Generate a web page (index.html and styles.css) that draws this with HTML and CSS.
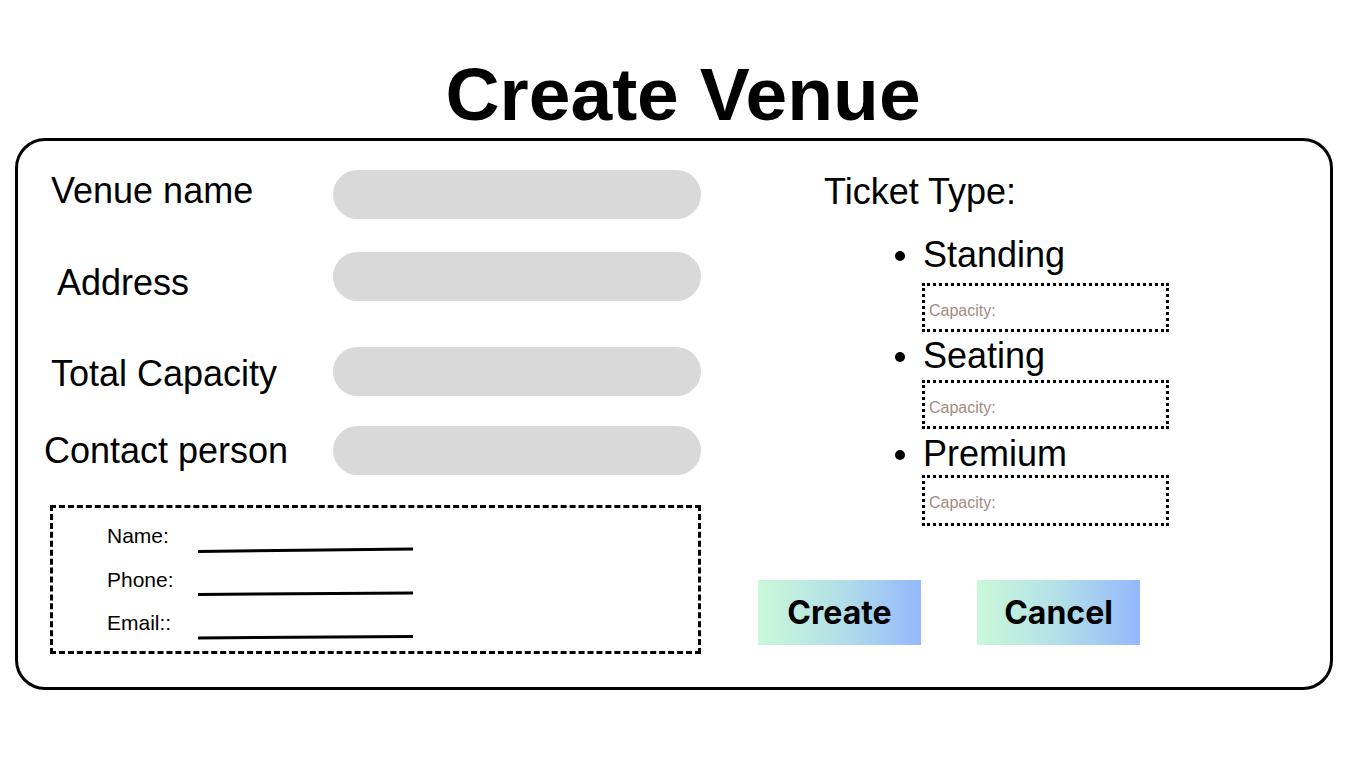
FILE: index.html
```html
<!DOCTYPE html>
<html lang="en">
<head>
<meta charset="utf-8">
<title>Create Venue</title>
<link rel="stylesheet" href="styles.css">
</head>
<body>
  <h1 class="title">Create Venue</h1>
  <main class="card">
    <section class="left">
      <div class="row row-1">
        <label class="label lab-1">Venue name</label>
        <div class="field"></div>
      </div>
      <div class="row row-2">
        <label class="label lab-2">Address</label>
        <div class="field"></div>
      </div>
      <div class="row row-3">
        <label class="label lab-3">Total Capacity</label>
        <div class="field"></div>
      </div>
      <div class="row row-4">
        <label class="label lab-4">Contact person</label>
        <div class="field"></div>
      </div>
      <div class="contact">
        <div class="crow">
          <span class="clabel">Name:</span>
          <svg class="cline" width="216" height="8" viewBox="0 0 216 8"><line x1="0" y1="5.5" x2="215" y2="3" stroke="#000" stroke-width="3"/></svg>
        </div>
        <div class="crow">
          <span class="clabel">Phone:</span>
          <svg class="cline" width="216" height="8" viewBox="0 0 216 8"><line x1="0" y1="5.5" x2="215" y2="4" stroke="#000" stroke-width="3"/></svg>
        </div>
        <div class="crow">
          <span class="clabel">Email::</span>
          <svg class="cline" width="216" height="8" viewBox="0 0 216 8"><line x1="0" y1="5" x2="215" y2="3.5" stroke="#000" stroke-width="3"/></svg>
        </div>
      </div>
    </section>
    <section class="right">
      <div class="ticket-title">Ticket Type:</div>
      <ul class="types">
        <li class="type type-1">
          <div class="type-name"><span class="dot"></span>Standing</div>
          <div class="cap">Capacity:</div>
        </li>
        <li class="type type-2">
          <div class="type-name"><span class="dot"></span>Seating</div>
          <div class="cap">Capacity:</div>
        </li>
        <li class="type type-3">
          <div class="type-name"><span class="dot"></span>Premium</div>
          <div class="cap">Capacity:</div>
        </li>
      </ul>
      <div class="actions">
        <button class="btn">Create</button>
        <button class="btn">Cancel</button>
      </div>
    </section>
  </main>
</body>
</html>
```

FILE: styles.css
```css
* { box-sizing: border-box; }

html, body {
  margin: 0;
  padding: 0;
  background: #fff;
  color: #000;
  font-family: "Liberation Sans", Arial, sans-serif;
}

body {
  width: 1366px;
  height: 768px;
  overflow: hidden;
}

.title {
  margin: 57px 0 0;
  font-size: 75px;
  line-height: 75px;
  font-weight: 700;
  text-align: center;
}

.card {
  margin: 6px 0 0 15px;
  width: 1318px;
  height: 552px;
  border: 3px solid #000;
  border-radius: 30px;
  display: flex;
  gap: 57px;
}

.left {
  width: 683px;
  padding-top: 29px;
  display: flex;
  flex-direction: column;
}

.row {
  display: grid;
  grid-template-columns: 315px 368px;
  align-items: start;
}
.row-2 { margin-top: 33px; }
.row-3 { margin-top: 44px; }
.row-4 { margin-top: 30px; }

.label {
  font-size: 36px;
  line-height: 40px;
  white-space: nowrap;
}
.lab-1 { padding-left: 33px; margin-top: 1px; }
.lab-2 { padding-left: 39px; margin-top: 11px; }
.lab-3 { padding-left: 33px; margin-top: 7px; }
.lab-4 { padding-left: 26px; margin-top: 5px; }

.field {
  height: 49px;
  background: #d9d9d9;
  border-radius: 25px;
}

.contact {
  margin: 30px 0 0 32px;
  width: 651px;
  height: 149px;
  border: 3px dashed #000;
  padding: 16px 0 0 54px;
  display: flex;
  flex-direction: column;
  gap: 19.5px;
}

.crow {
  display: flex;
  align-items: flex-start;
  height: 24px;
}

.clabel {
  width: 91px;
  font-size: 21px;
  line-height: 24px;
}

.cline {
  display: block;
  margin-top: 21.5px;
}

.right {
  width: 500px;
  padding-top: 30.5px;
  display: flex;
  flex-direction: column;
}

.ticket-title {
  margin-left: 66px;
  font-size: 36px;
  line-height: 40px;
}

.types {
  list-style: none;
  margin: 23.5px 0 0;
  padding: 0;
}

.type-1 { margin-bottom: 3.5px; }
.type-2 { margin-bottom: 4.5px; }

.type-name {
  display: flex;
  align-items: center;
  font-size: 36px;
  line-height: 40px;
  margin-left: 137px;
}

.dot {
  width: 10px;
  height: 10px;
  border-radius: 50%;
  background: #000;
  margin: 2px 18px 0 0;
}

.cap {
  margin-left: 164px;
  width: 247px;
  height: 49px;
  border: 3px dotted #000;
  padding: 15px 0 0 4px;
  font-size: 16px;
  line-height: 20px;
  color: #a38b7d;
}
.type-1 .cap { margin-top: 8px; }
.type-2 .cap { margin-top: 4.5px; }
.type-3 .cap { margin-top: 1.5px; height: 51px; }

.actions {
  margin-top: 54px;
  display: flex;
  gap: 56px;
}

.btn {
  width: 163px;
  height: 65px;
  border: 0;
  padding: 0;
  background: linear-gradient(90deg, #caf9d9 0%, #b3dfe8 50%, #94b8fc 100%);
  font-family: Inter, "Liberation Sans", sans-serif;
  font-weight: 700;
  font-size: 32px;
  color: #000;
}
```
